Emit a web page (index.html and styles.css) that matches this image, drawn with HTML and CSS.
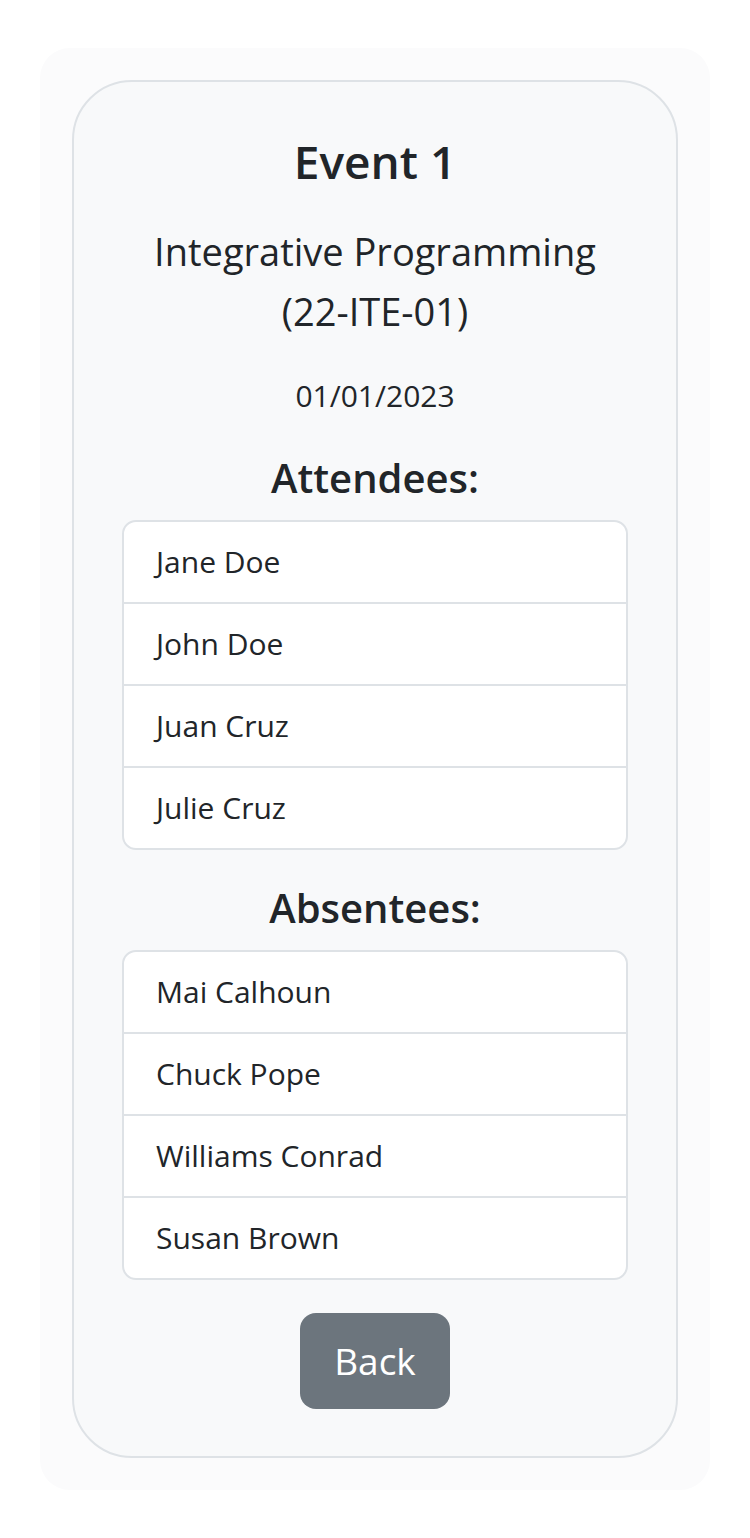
FILE: index.html
```html
<!DOCTYPE html>
<html lang="en">
<head>
<meta charset="utf-8">
<title>Event 1</title>
<link rel="stylesheet" href="styles.css">
</head>
<body>
<div class="outer">
  <div class="card">
    <h2 class="title">Event 1</h2>
    <p class="subject">Integrative Programming<br>(22-ITE-01)</p>
    <p class="date">01/01/2023</p>
    <h4 class="section">Attendees:</h4>
    <ul class="list">
      <li>Jane Doe</li>
      <li>John Doe</li>
      <li>Juan Cruz</li>
      <li>Julie Cruz</li>
    </ul>
    <h4 class="section">Absentees:</h4>
    <ul class="list">
      <li>Mai Calhoun</li>
      <li>Chuck Pope</li>
      <li>Williams Conrad</li>
      <li>Susan Brown</li>
    </ul>
    <button class="btn-back" type="button">Back</button>
  </div>
</div>
</body>
</html>
```

FILE: styles.css
```css
* { box-sizing: border-box; }
html, body { margin: 0; padding: 0; background: #ffffff; }
body {
  font-family: "Open Sans", "Noto Sans", sans-serif;
  color: #212529;
  padding: 48px 40px;
}
.outer {
  background: #fbfbfc;
  border-radius: 30px;
  padding: 32px;
}
.card {
  background: #f8f9fa;
  border: 2px solid #dee2e6;
  border-radius: 60px;
  padding: 50px 48px 47px;
  text-align: center;
  display: flex;
  flex-direction: column;
  align-items: stretch;
}
.title {
  font-size: 46px;
  font-weight: 600;
  line-height: 59px;
  margin: 0 0 30px;
}
.subject {
  font-size: 38px;
  line-height: 60px;
  font-weight: 400;
  margin: 0 0 31px;
}
.date {
  font-size: 30px;
  line-height: 48px;
  margin: 0 0 32px;
}
.section {
  font-size: 40px;
  font-weight: 600;
  line-height: 52px;
  margin: 0 0 16px;
}
.list {
  list-style: none;
  margin: 0 0 32px;
  padding: 0;
  background: #ffffff;
  border: 2px solid #dee2e6;
  border-radius: 14px;
  text-align: left;
  overflow: hidden;
}
.list li {
  font-size: 30px;
  line-height: 48px;
  padding: 16px 32px;
  border-top: 2px solid #dee2e6;
  height: 82px;
}
.list li:first-child { border-top: 0; height: 80px; }
.btn-back {
  align-self: center;
  background: #6c757d;
  color: #ffffff;
  border: 0;
  border-radius: 16px;
  font-family: inherit;
  font-size: 37px;
  line-height: 60px;
  width: 150px;
  height: 96px;
  padding: 0;
  margin-top: 1px;
}
```
